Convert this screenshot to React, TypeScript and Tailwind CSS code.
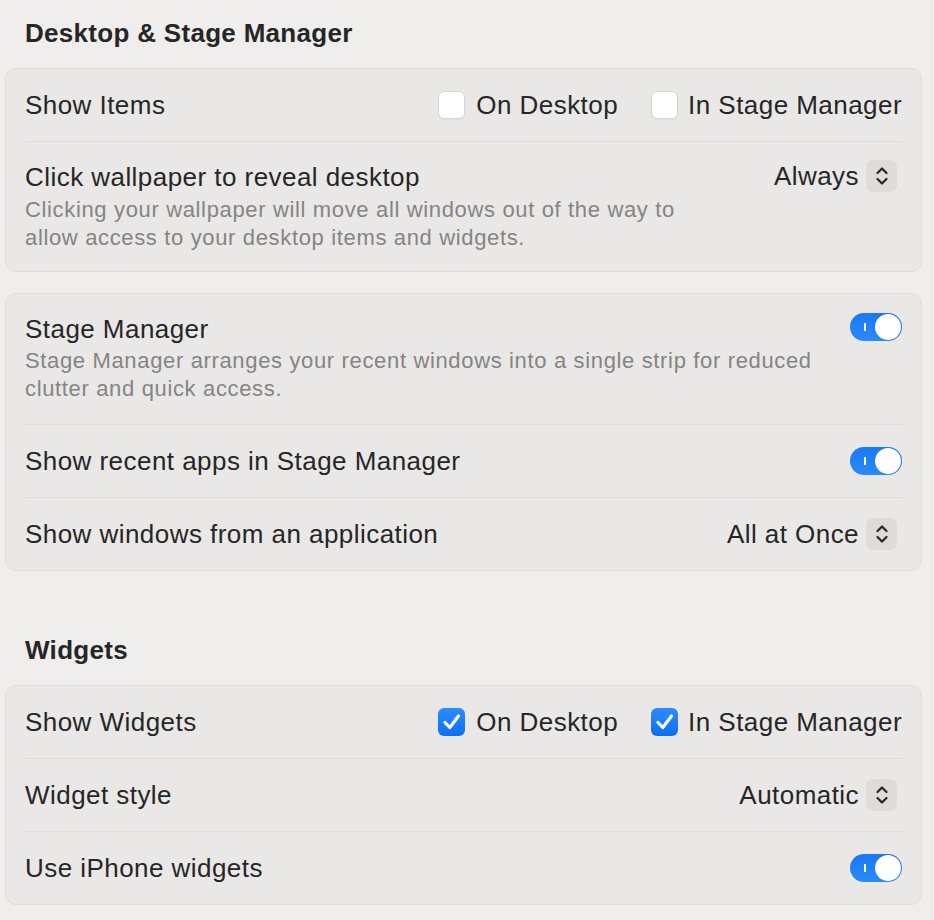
import React from "react";

const font = { fontFamily: '"Liberation Sans", Arial, sans-serif' };

function Toggle() {
  return (
    <div className="relative h-[28px] w-[52px] shrink-0 rounded-full bg-gradient-to-b from-[#1a78f2] to-[#2a8bfb]">
      <div className="absolute left-[14px] top-[10px] h-[8px] w-[2px] bg-white" />
      <div className="absolute right-[1px] top-[1px] h-[26px] w-[26px] rounded-full bg-white shadow-[0_0_1px_rgba(0,0,0,0.3)]" />
    </div>
  );
}

function Checkbox({ checked }: { checked?: boolean }) {
  if (checked) {
    return (
      <div className="flex h-[28px] w-[27px] shrink-0 items-center justify-center rounded-[6px] bg-gradient-to-b from-[#2b8cff] to-[#0b6ff2]">
        <svg width="20" height="18" viewBox="0 0 20 18" fill="none">
          <path d="M3 9.5 L7.8 14.5 L16.5 3" stroke="white" strokeWidth="3.2" strokeLinecap="round" strokeLinejoin="round" />
        </svg>
      </div>
    );
  }
  return (
    <div className="h-[28px] w-[27px] shrink-0 rounded-[6px] border border-[#d6d5d3] bg-white shadow-[0_1px_1px_rgba(0,0,0,0.04)]" />
  );
}

function Stepper() {
  return (
    <div className="flex h-[32px] w-[31px] shrink-0 items-center justify-center rounded-[7px] bg-[#dddcda]">
      <svg width="14" height="24" viewBox="0 0 14 24" fill="none">
        <path d="M2.5 9 L7 4.5 L11.5 9" stroke="#262626" strokeWidth="2.2" strokeLinecap="round" strokeLinejoin="round" />
        <path d="M2.5 15 L7 19.5 L11.5 15" stroke="#262626" strokeWidth="2.2" strokeLinecap="round" strokeLinejoin="round" />
      </svg>
    </div>
  );
}

function Popup({ value }: { value: string }) {
  return (
    <div className="mr-[5px] flex items-center gap-[7px]">
      <span>{value}</span>
      <Stepper />
    </div>
  );
}

function CheckPair({ checked }: { checked?: boolean }) {
  return (
    <div className="flex items-center">
      <div className="flex items-center gap-[11px]">
        <Checkbox checked={checked} />
        <span>On Desktop</span>
      </div>
      <div className="ml-[33px] flex items-center gap-[10px]">
        <Checkbox checked={checked} />
        <span>In Stage Manager</span>
      </div>
    </div>
  );
}

function Row({ children, last }: { children: React.ReactNode; last?: boolean }) {
  return (
    <div className={last ? "" : "border-b border-[#dddcda]"}>
      <div className="flex min-h-[72px] items-center justify-between py-[20px]">{children}</div>
    </div>
  );
}

function Card({ children }: { children: React.ReactNode }) {
  return (
    <div className="rounded-[11px] border border-[#dedddb] bg-[#e9e8e6] px-[19px]">{children}</div>
  );
}

function Heading({ children }: { children: React.ReactNode }) {
  return (
    <div className="px-[20px] text-[26px] font-bold leading-[32px] tracking-[0.3px] text-[#262626]">{children}</div>
  );
}

export default function App() {
  return (
    <div
      style={font}
      className="flex h-[920px] w-[934px] overflow-hidden bg-[#efeeec] text-[26px] leading-[32px] tracking-[0.45px] text-[#262626]"
    >
      <div className="flex w-[922px] flex-col pl-[5px] pt-[17px]">
        <Heading>Desktop &amp; Stage Manager</Heading>
        <div className="mt-[19px] flex flex-col gap-[21px]">
          <Card>
            <Row>
              <span>Show Items</span>
              <CheckPair />
            </Row>
            <div className="flex items-start justify-between pb-[19px] pt-[19px]">
              <div className="flex flex-col">
                <span>Click wallpaper to reveal desktop</span>
                <span className="mt-[3px] max-w-[670px] text-[22px] leading-[28px] tracking-[0.65px] text-[#858483]">
                  Clicking your wallpaper will move all windows out of the way to allow access to your desktop items and widgets.
                </span>
              </div>
              <div className="-mt-[1px]">
                <Popup value="Always" />
              </div>
            </div>
          </Card>
          <Card>
            <div className="border-b border-[#dddcda]">
              <div className="flex items-start justify-between pb-[21px] pt-[19px]">
                <div className="flex flex-col">
                  <span>Stage Manager</span>
                  <span className="mt-[2px] max-w-[800px] text-[22px] leading-[28px] tracking-[0.65px] text-[#858483]">
                    Stage Manager arranges your recent windows into a single strip for reduced clutter and quick access.
                  </span>
                </div>
                <Toggle />
              </div>
            </div>
            <Row>
              <span>Show recent apps in Stage Manager</span>
              <Toggle />
            </Row>
            <Row last>
              <span>Show windows from an application</span>
              <Popup value="All at Once" />
            </Row>
          </Card>
        </div>
        <div className="mt-[63px]">
          <Heading>Widgets</Heading>
        </div>
        <div className="mt-[19px]">
          <Card>
            <Row>
              <span>Show Widgets</span>
              <CheckPair checked />
            </Row>
            <Row>
              <span>Widget style</span>
              <Popup value="Automatic" />
            </Row>
            <Row last>
              <span>Use iPhone widgets</span>
              <Toggle />
            </Row>
          </Card>
        </div>
      </div>
      <div className="ml-[9px] h-full w-px bg-[#e3e2e0]" />
    </div>
  );
}
